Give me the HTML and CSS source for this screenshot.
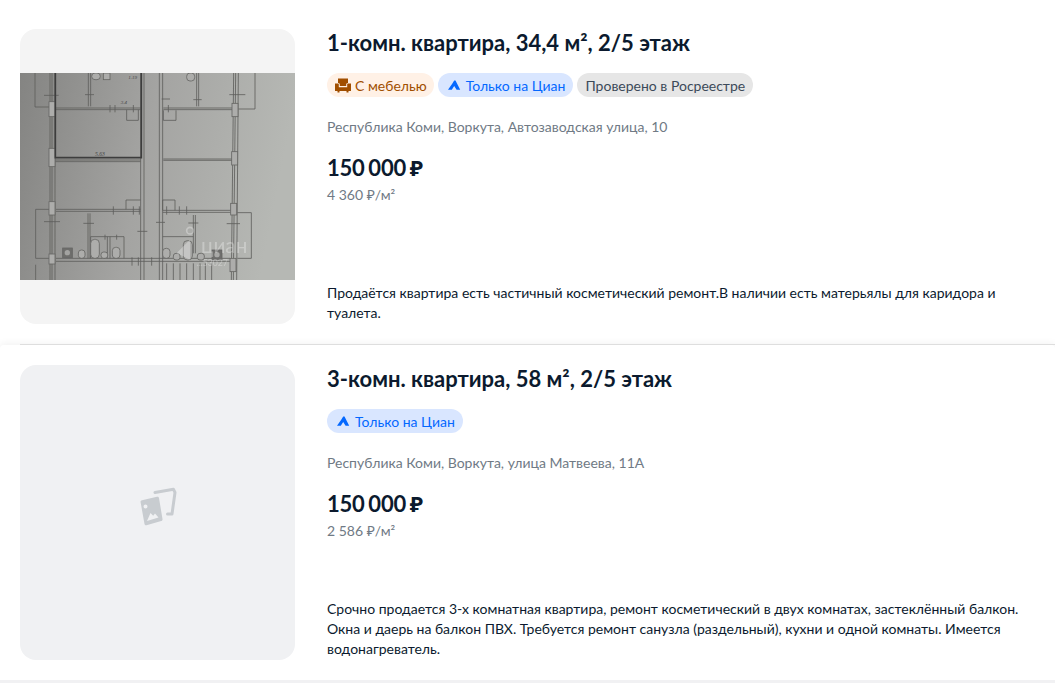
FILE: index.html
```html
<!DOCTYPE html>
<html lang="ru">

<head>
  <meta charset="UTF-8">
  <title>Квартиры</title>
  <link rel="stylesheet" href="styles.css">
</head>

<body>
  <div class="list">
    <div class="card">
      <div class="photo">
        <svg class="plan" viewBox="0 0 825 621" width="275" height="207">
          <defs>
            <linearGradient id="paper" x1="0" y1="0" x2="1" y2="0.15">
              <stop offset="0" stop-color="#848482"/>
              <stop offset="0.5" stop-color="#a4a4a2"/>
              <stop offset="1" stop-color="#b6b8b4"/>
            </linearGradient>
            <filter id="soft"><feGaussianBlur stdDeviation="1.2"/></filter>
          </defs>
          <rect width="825" height="621" fill="url(#paper)"/>
          <g filter="url(#soft)" fill="none" stroke="#5f5f5d" stroke-width="2.500">
            <!-- наружные и коридорные стены -->
            <path d="M90 0V621M96 0V621M105 0V621M362 0V621M372 0V621M418 0V621M428 0V621M641 0L634 621M647 0L640 621M655 0L650 621"/>
            <!-- пристройки слева и справа -->
            <path d="M45 0V102H90M705 0V108H655M88 409H47V556H88M47 575V621M652 419H694V556H652"/>
            <!-- перегородки -->
            <path d="M106 105H362M106 110H362M430 105H636M430 110H636M106 261H362M106 266H362M430 258H636M430 262H636"/>
            <path d="M108 409H362M108 415H362M428 412H632M428 418H632"/>
            <path d="M205 0V100M212 0V100M530 0V100M536 0V100M204 421V556M210 421V556M520 426V541M526 426V541"/>
            <path d="M320 110V142H355V110M430 112V142H468V112M318 409V381H362M428 412V381H465V412"/>
            <path d="M212 556V491H312V556M262 491V556M270 491V556M428 491H520"/>
            <path d="M108 556H630M108 565H630"/>
            <path d="M440 571V621M460 571V621M480 571V621M500 571V621M520 571V621M540 571V621M556 571V621M575 571V621"/>
            <!-- засечки размеров -->
            <path d="M72 67H116M72 446H120M620 452H660M628 65H676M195 65H222M520 80H545M352 475H382M408 448H435M425 78H450M270 96V118M285 96V118M340 96V118M445 96V118M280 400V425M340 400V425M358 400V425M440 400V425M478 400V425M500 400V425M255 485V500M290 485V500M336 553V578M355 553V578M395 553V578M190 451H222M505 450H535"/>
          </g>
          <g filter="url(#soft)" stroke="#666664" stroke-width="2.500" fill="#adadab">
            <rect x="87" y="86" width="18" height="45"/>
            <rect x="87" y="226" width="18" height="55"/>
            <rect x="87" y="386" width="18" height="40"/>
            <rect x="87" y="543" width="18" height="30"/>
            <rect x="636" y="91" width="18" height="40"/>
            <rect x="635" y="236" width="18" height="40"/>
            <rect x="632" y="391" width="18" height="35"/>
            <rect x="630" y="556" width="18" height="40"/>
            <rect x="215" y="0" width="26" height="20" rx="10"/>
            <rect x="250" y="0" width="20" height="20"/>
            <rect x="500" y="0" width="24" height="24" rx="10"/>
            <rect x="175" y="531" width="20" height="25" rx="9"/>
            <rect x="212" y="499" width="26" height="57" rx="12"/>
            <rect x="243" y="537" width="20" height="19" rx="8"/>
            <rect x="277" y="523" width="23" height="33" rx="10"/>
            <rect x="428" y="526" width="22" height="30" rx="10"/>
            <rect x="460" y="541" width="20" height="20" rx="8"/>
            <rect x="490" y="503" width="27" height="58" rx="12"/>
            <rect x="532" y="541" width="21" height="20" rx="8"/>
            <rect x="128" y="525" width="29" height="29" fill="#6e6e6c"/>
            <rect x="576" y="531" width="30" height="28" fill="#6e6e6c"/>
            <circle cx="142" cy="539" r="8" fill="#a3a3a1" stroke="none"/>
            <circle cx="591" cy="545" r="8" fill="#a9a9a7" stroke="none"/>
          </g>
          <path filter="url(#soft)" d="M106 0V254H364V0" fill="none" stroke="#3e3e3d" stroke-width="5"/>
          <g class="plan-note">
            <text x="225" y="250" font-size="17">5.63</text>
            <text x="325" y="18" font-size="15">1.19</text>
            <text x="302" y="93" font-size="15">3.4</text>
          </g>
          <g class="plan-mark">
            <circle cx="510" cy="473" r="10" fill="none" stroke="#fff" stroke-width="5"/>
            <path d="M470 540L510 500V560Z" fill="#fff"/>
            <text x="543" y="541" font-size="62">циан</text>
            <text x="530" y="580" font-size="26">...53027</text>
          </g>
        </svg>
      </div>
      <div class="info">
        <h2 class="title">1-комн. квартира, 34,4 м², 2/5 этаж</h2>
        <div class="tags">
          <span class="tag tag-orange">
            <svg class="tag-icon" viewBox="0 0 16 16" width="16" height="16"><path fill="#a14f00" d="M3 1.500h10v4.500h-.3c-.9 0-1.500.6-1.500 1.500v1.500H4.800V7.500c0-.9-.6-1.500-1.500-1.500H3zM0 6.500h3c.6 0 .8.4.8 1v2.800h8.400V7.500c0-.6.2-1 .8-1h3V14h-2.500v1.500h-2V14h-7v1.500h-2V14H0z"/></svg>
            С мебелью
          </span>
          <span class="tag tag-blue">
            <svg class="tag-icon" viewBox="0 0 16 16" width="16" height="16"><path fill="#0468ff" d="M8.200 3.500h1.300l4.700 9.300h-3.600L8.200 9l-2.400 3.800H2l4.200-6z"/></svg>
            Только на Циан
          </span>
          <span class="tag tag-gray">Проверено в Росреестре</span>
        </div>
        <div class="address">Республика Коми, Воркута, Автозаводская улица, 10</div>
        <div class="price">150 000 ₽</div>
        <div class="per-meter">4 360 ₽/м²</div>
        <p class="descr">Продаётся квартира есть частичный косметический ремонт.В наличии есть матерьялы для каридора и туалета.</p>
      </div>
    </div>

    <div class="sep"></div>

    <div class="card card-raised">
      <div class="photo photo-empty">
        <svg class="no-photo" viewBox="0 0 48 48" width="48" height="48">
          <path fill="none" stroke="#c8ccd0" stroke-width="3" stroke-linejoin="round" stroke-linecap="round" d="M21 6.500L39.500 3.300 41 6.500 38 28H33.500"/>
          <path fill="#c8ccd0" fill-rule="evenodd" d="M8 14.200L23 10.700c1-.2 1.800.3 2 1.300l3.500 21c.2 1-.4 1.800-1.300 2L12.500 39.300c-1 .2-1.800-.4-2-1.300L6.600 16.200c-.2-1 .4-1.800 1.400-2zM11.500 18.500a2 2 0 1 0 0 4 2 2 0 0 0 0-4zM16.500 27L13 35l11.500-3.500-3.500-4-1.800 2.200z"/>
        </svg>
      </div>
      <div class="info">
        <h2 class="title">3-комн. квартира, 58 м², 2/5 этаж</h2>
        <div class="tags">
          <span class="tag tag-blue">
            <svg class="tag-icon" viewBox="0 0 16 16" width="16" height="16"><path fill="#0468ff" d="M8.200 3.500h1.300l4.700 9.300h-3.600L8.200 9l-2.400 3.800H2l4.200-6z"/></svg>
            Только на Циан
          </span>
        </div>
        <div class="address">Республика Коми, Воркута, улица Матвеева, 11А</div>
        <div class="price">150 000 ₽</div>
        <div class="per-meter">2 586 ₽/м²</div>
        <p class="descr">Срочно продается 3-х комнатная квартира, ремонт косметический в двух комнатах, застеклённый балкон. Окна и даерь на балкон ПВХ. Требуется ремонт санузла (раздельный), кухни и одной комнаты. Имеется водонагреватель.</p>
      </div>
    </div>

    <div class="list-end"></div>
  </div>
</body>

</html>
```

FILE: styles.css
```css
* {
  margin: 0;
  padding: 0;
  box-sizing: border-box;
}

html,
body {
  height: 100%;
  overflow: hidden;
}

body {
  background-color: #fff;
  color: #0b1a2e;
  font-family: Lato, "Noto Sans", sans-serif;
}

.list {
  padding-top: 9px;
}

.card {
  display: flex;
  gap: 32px;
  padding: 20px;
  height: 335px;
  background-color: #fff;
}

.sep {
  height: 1px;
  margin-left: 20px;
  background-color: #dedede;
  position: relative;
  z-index: 1;
}

.card-raised {
  border-radius: 4px 4px 0 0;
  box-shadow: 0 -2px 7px rgba(0, 0, 0, 0.05);
}

.list-end {
  height: 3px;
  background-color: #f1f1f3;
}

.photo {
  width: 275px;
  height: 295px;
  flex: none;
  background-color: #f4f4f4;
  border-radius: 16px;
  display: flex;
  align-items: center;
  justify-content: center;
  overflow: hidden;
}

.photo-empty {
  background-color: #f0f1f3;
}

.plan {
  display: block;
}

.plan-note {
  fill: #444;
  font-family: "Liberation Serif", serif;
  font-style: italic;
}

.plan-mark {
  fill: #fff;
  opacity: 0.3;
  font-family: Lato, sans-serif;
}

.no-photo {
  margin-top: -6px;
}

.info {
  flex: 1;
  min-width: 0;
  display: flex;
  flex-direction: column;
}

.title {
  font-size: 22px;
  line-height: 28px;
  font-weight: 700;
  margin-bottom: 16px;
}

.tags {
  display: flex;
  gap: 4px;
  margin-bottom: 20px;
}

.tag {
  display: flex;
  align-items: center;
  gap: 4px;
  height: 24px;
  padding: 0 8px;
  border-radius: 12px;
  font-size: 14px;
  white-space: nowrap;
}

.tag-orange {
  background-color: #fff1e6;
  color: #a14f00;
  padding-right: 7px;
}

.tag-blue {
  background-color: #d9e6ff;
  color: #0468ff;
}

.tag-gray {
  background-color: #e6e6e6;
  color: #3c4a59;
}

.address {
  font-size: 14px;
  line-height: 20px;
  color: #707a85;
  margin-bottom: 17px;
}

.price {
  font-size: 22px;
  line-height: 28px;
  font-weight: 700;
  letter-spacing: -0.2px;
  word-spacing: -1.5px;
  margin-bottom: 3px;
}

.per-meter {
  font-size: 14px;
  line-height: 20px;
  color: #707a85;
}

.descr {
  margin-top: auto;
  margin-bottom: 1px;
  font-size: 14px;
  line-height: 20px;
  color: #0b1a2e;
}
```
